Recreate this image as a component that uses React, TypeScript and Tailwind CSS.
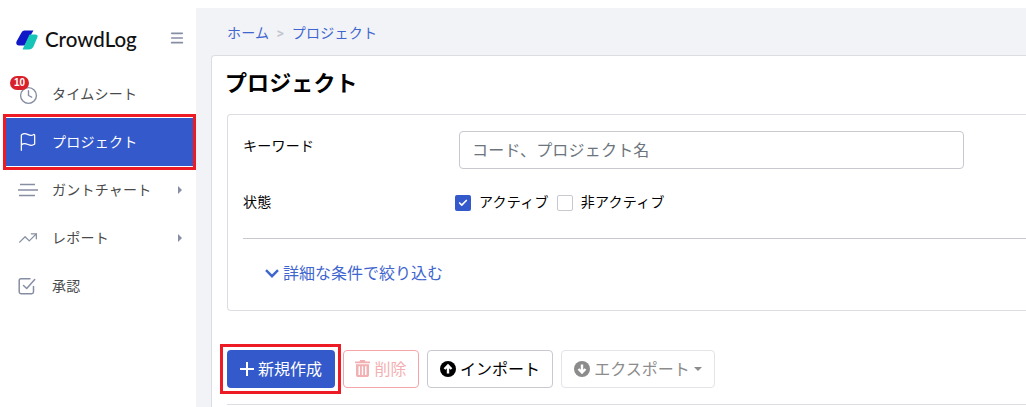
import React from 'react';
import { Check, Clock, Flag, Menu, TrendingUp } from 'lucide-react';

const JP = "font-['Inter','Noto_Sans_CJK_JP',sans-serif]";

const Logo = () => (
  <svg width="22" height="20" viewBox="0 0 22 20">
    <path d="M8.5 0.5H17.5L8.5 15.5H3Q-0.5 15.5 0.5 11.5L5.5 2.5Q6.5 0.5 8.5 0.5Z" fill="#1018c8" />
    <path d="M13.5 4.5H19.5Q22.5 4.5 21.3 7.5L17.5 16.5Q16 19.5 13 19.5H6.5Z" fill="#17c4b8" />
  </svg>
);

const GanttIcon = () => (
  <svg width="20" height="14" viewBox="0 0 20 14" stroke="currentColor" strokeWidth="1.7">
    <path d="M2 1.5H17M0 7H20M1 12.5H17" />
  </svg>
);

const ApprovalIcon = () => (
  <svg width="18" height="18" viewBox="0 0 18 18" fill="none" stroke="currentColor" strokeWidth="1.5" strokeLinecap="round" strokeLinejoin="round">
    <path d="M15.5 9.5V15A1.8 1.8 0 0 1 13.7 16.7H3A1.8 1.8 0 0 1 1.2 15V3.5A1.8 1.8 0 0 1 3 1.7H12" />
    <path d="M5.5 8.5L8.7 11.5L16.7 2.5" />
  </svg>
);

const PlusIcon = () => (
  <svg width="14" height="14" viewBox="0 0 14 14" stroke="currentColor" strokeWidth="2">
    <path d="M7 0V14M0 7H14" />
  </svg>
);

const TrashIcon = () => (
  <svg width="15" height="17" viewBox="0 0 15 17" fill="currentColor">
    <path d="M5.2 0H9.8L10.5 1.5H15V3.2H0V1.5H4.5Z" />
    <path fillRule="evenodd" d="M1 4.3H14V15.3A1.7 1.7 0 0 1 12.3 17H2.7A1.7 1.7 0 0 1 1 15.3ZM3.5 6.3V15H5V6.3ZM6.8 6.3V15H8.2V6.3ZM10 6.3V15H11.5V6.3Z" />
  </svg>
);

const CircleArrow = ({ down }: { down?: boolean }) => (
  <svg width="16" height="16" viewBox="0 0 16 16" className={down ? 'rotate-180' : ''}>
    <circle cx="8" cy="8" r="8" fill="currentColor" />
    <path d="M8 12.5V4.5M4.5 8L8 4.5L11.5 8" fill="none" stroke="white" strokeWidth="2.4" />
  </svg>
);

const NavItem = ({ icon, label, arrow, badge }: { icon: React.ReactNode; label: string; arrow?: boolean; badge?: boolean }) => (
  <div className="relative mx-[6px] flex h-12 items-center pl-[12px] pr-[8px] text-sm tracking-[0.25px] text-[#4a4a4a]">
    <span className="flex w-[34px] items-center text-[#868ea3]">{icon}</span>
    <span className="flex-1 pb-[1px]">{label}</span>
    {arrow && <span className="h-0 w-0 border-y-[4px] border-l-[4px] border-y-transparent border-l-[#868ea3]" />}
    {badge && (
      <span className="absolute left-[4px] top-[6px] flex h-[14px] w-[19px] items-center justify-center rounded-full bg-[#d9202a] font-['Liberation_Sans',sans-serif] text-[10px] font-bold tracking-normal text-white">
        10
      </span>
    )}
  </div>
);

const ActiveNavItem = ({ icon, label }: { icon: React.ReactNode; label: string }) => (
  <div className="-my-1 ml-[3px] border-3 border-[#ed1c24] py-px">
    <div className="flex h-12 items-center bg-[#3359cb] pl-[12px] text-sm tracking-[0.25px] text-white">
      <span className="flex w-[34px] items-center">{icon}</span>
      <span className="pb-[1px]">{label}</span>
    </div>
  </div>
);

const Sidebar = () => (
  <aside className="flex w-[196px] shrink-0 flex-col bg-white">
    <div className="flex h-[70px] items-center pl-4 pr-[11px] pt-[9px]">
      <Logo />
      <span className="ml-[7px] flex-1 font-['Lato',sans-serif] text-[20.5px] font-medium leading-none text-[#111]">CrowdLog</span>
      <Menu size={16} strokeWidth={2.5} className="-translate-y-[2px] text-[#868ea3]" />
    </div>
    <NavItem icon={<Clock size={19} strokeWidth={1.75} className="translate-x-[1px] translate-y-[1px]" />} label="タイムシート" badge />
    <ActiveNavItem icon={<Flag size={20} strokeWidth={1.5} />} label="プロジェクト" />
    <NavItem icon={<GanttIcon />} label="ガントチャート" arrow />
    <NavItem icon={<TrendingUp size={20} strokeWidth={1.5} />} label="レポート" arrow />
    <NavItem icon={<ApprovalIcon />} label="承認" />
  </aside>
);

const Toolbar = () => (
  <div className="mt-[39px] flex h-[38px] items-stretch gap-2 text-base">
    <div className="-my-[6px] -ml-[7px] -mr-[6px] border-3 border-[#ed1c24] py-[3px] pl-1 pr-[3px]">
      <button className="flex h-full w-[108px] items-center justify-center gap-1 rounded bg-[#3359cb] pb-px text-white">
        <PlusIcon />
        新規作成
      </button>
    </div>
    <button className="flex w-[76px] items-center justify-center gap-1 rounded border border-[#f5a5a9] pb-px text-[#f3b0b3]">
      <TrashIcon />
      削除
    </button>
    <button className="flex w-[126px] items-center justify-center gap-1 rounded border border-[#c8c8d0] pb-px text-black">
      <CircleArrow />
      インポート
    </button>
    <button className="flex w-[154px] items-center justify-center gap-1 rounded border border-[#e4e4e8] pb-px text-[#8c8c8c]">
      <CircleArrow down />
      エクスポート
      <span className="h-0 w-0 border-x-[4px] border-t-[4px] border-x-transparent border-t-[#8c8c8c]" />
    </button>
  </div>
);

const App: React.FC = () => {
  return (
    <div className={`flex h-[407px] w-[1026px] overflow-hidden bg-white ${JP}`}>
      <Sidebar />
      <main className="mt-2 min-w-0 flex-1 bg-[#f2f3f7] pl-[15px]">
        <div className="flex h-[47px] items-center pl-4 pt-[3px] text-sm tracking-[0.25px] text-[#3f66cf]">
          <span>ホーム</span>
          <span className="mx-[7px] text-xs font-bold text-[#c0c4cc]">&gt;</span>
          <span>プロジェクト</span>
        </div>
        <section className="w-[900px] rounded-tl border border-r-0 border-[#dcdde2] bg-white pb-4 pl-[15px] pt-[12px]">
          <h1 className="-ml-[2px] h-[34px] text-[22px] font-bold leading-[30px] tracking-[0.1px] text-black">プロジェクト</h1>
          <div className="mt-3 h-[197px] rounded-l border border-r-0 border-[#dcdde2] pl-[15px] pt-4">
            <div className="flex h-[38px]">
              <label className="w-[216px] pt-[5px] text-sm tracking-[0.25px] text-black">キーワード</label>
              <input
                className="h-[38px] w-[505px] rounded border border-[#c8c8d0] px-3 text-base tracking-[0.2px] text-[#495057] placeholder:text-[#6c757d]"
                placeholder="コード、プロジェクト名"
              />
            </div>
            <div className="mt-[23px] flex h-[22px] items-center text-sm tracking-[0.25px] text-black">
              <span className="w-[212px] pb-[2px]">状態</span>
              <span className="flex h-4 w-4 items-center justify-center rounded-[2px] bg-[#3359cb] text-white">
                <Check size={10} strokeWidth={4} />
              </span>
              <span className="ml-2 pb-[2px]">アクティブ</span>
              <span className="ml-2 h-4 w-4 rounded-[2px] border border-[#c8c8d0]" />
              <span className="ml-2 pb-[2px]">非アクティブ</span>
            </div>
            <hr className="mt-[24px] border-[#c8c8d0]" />
            <div className="ml-[22px] mt-[22px] flex items-center gap-1 text-[#3f66cf]">
              <svg width="14" height="9" viewBox="0 0 14 9" fill="none" stroke="currentColor" strokeWidth="2.4">
                <path d="M1 1.2L7 7.2L13 1.2" />
              </svg>
              <span className="text-base">詳細な条件で絞り込む</span>
            </div>
          </div>
          <Toolbar />
          <hr className="mt-4 border-[#dcdde2]" />
        </section>
      </main>
    </div>
  );
};

export default App;
